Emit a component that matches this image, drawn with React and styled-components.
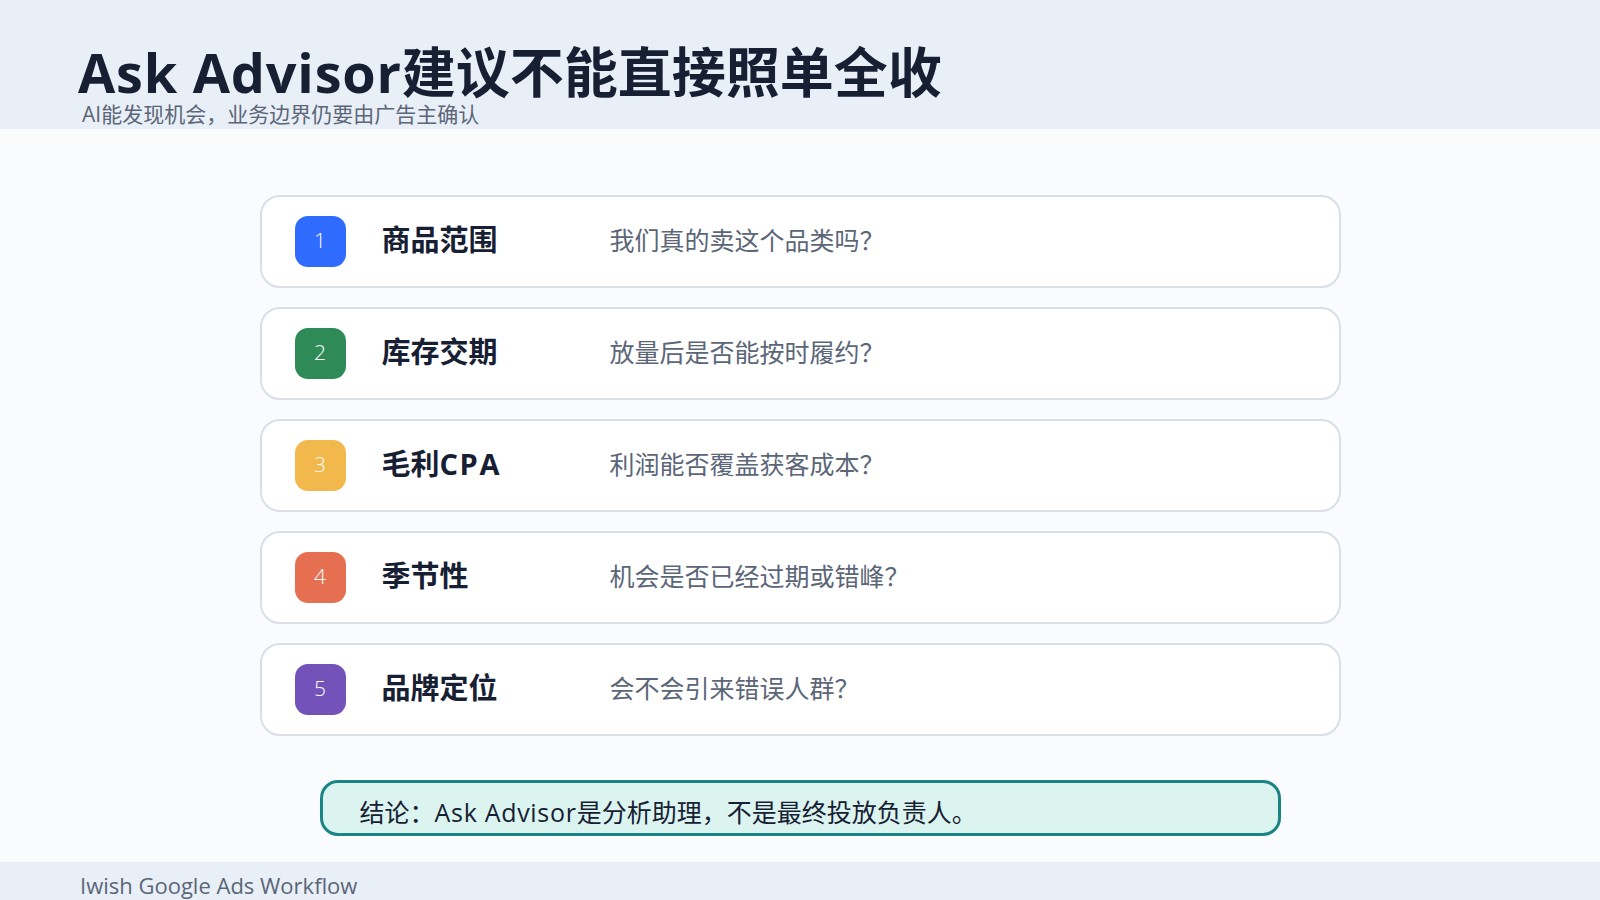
import React from "react";
import styled, { createGlobalStyle } from "styled-components";

const Global = createGlobalStyle`
  html, body { margin: 0; padding: 0; background: #f9fbfd; }
  body { font-family: "Open Sans", "Noto Sans CJK SC", sans-serif; }
`;
const Page = styled.div`
  width: 1600px; height: 900px; overflow: hidden;
  display: flex; flex-direction: column;
  background: #f9fbfd;
`;
const Header = styled.header`
  height: 129px; box-sizing: border-box; background: #e9eff6;
  padding: 37px 0 0 78px; flex: none;
`;
const Title = styled.h1`
  margin: 0; font-size: 54px; line-height: 70px; font-weight: 700; color: #172033;
`;
const Latin = styled.span`
  letter-spacing: ${p => p.$spacing}px;
`;
const Subtitle = styled.p`
  margin: -7px 0 0 4px; font-size: 21px; line-height: 28px; color: #5b6678;
`;
const Main = styled.main`
  flex: 1; display: flex; flex-direction: column; align-items: center;
  padding-top: 66px;
`;
const List = styled.div`
  width: 1081px; display: flex; flex-direction: column; gap: 19px;
`;
const Card = styled.div`
  height: 93px; box-sizing: border-box; background: #fff;
  border: 2px solid #d8dfe8; border-radius: 20px;
  display: flex; align-items: center; padding-left: 33px;
`;
const Badge = styled.div`
  width: 51px; height: 51px; border-radius: 13px; flex: none;
  background: ${p => p.$color}; color: #fff;
  display: flex; align-items: center; justify-content: center;
  font-size: 21px; font-weight: 300; margin-right: 36px; padding-bottom: 4px; box-sizing: border-box;
`;
const Label = styled.div`
  width: 228px; flex: none; font-size: 29px; line-height: 40px; font-weight: 700; color: #172033;
  padding-bottom: 4px;
`;
const Desc = styled.div`
  font-size: 25px; line-height: 34px; color: #5b6678; padding-bottom: 4px;
`;
const Conclusion = styled.div`
  width: 961px; height: 56px; box-sizing: border-box; margin-top: 44px;
  background: #dbf4ef; border: 3px solid #1b8585; border-radius: 18px;
  display: flex; align-items: center; padding: 5px 0 0 37px;
  font-size: 25px; color: #172033;
`;
const Footer = styled.footer`
  height: 38px; flex: none; background: #e9eff6; box-sizing: border-box;
  padding-left: 80px; font-size: 22px; line-height: 46px; color: #5b6678;
  overflow: hidden;
`;

const rows = [
  ["1", "#2f6bff", "商品范围", "我们真的卖这个品类吗？"],
  ["2", "#2e8b57", "库存交期", "放量后是否能按时履约？"],
  ["3", "#f2b84b", <>毛利<Latin $spacing={1.6}>CPA</Latin></>, "利润能否覆盖获客成本？"],
  ["4", "#e76f51", "季节性", "机会是否已经过期或错峰？"],
  ["5", "#7353ba", "品牌定位", "会不会引来错误人群？"],
];

export default function App() {
  return (
    <Page>
      <Global />
      <Header>
        <Title><Latin $spacing={0.8}>Ask Advisor</Latin>建议不能直接照单全收</Title>
        <Subtitle>AI能发现机会，业务边界仍要由广告主确认</Subtitle>
      </Header>
      <Main>
        <List>
          {rows.map(([n, c, l, d]) => (
            <Card key={n}>
              <Badge $color={c}>{n}</Badge>
              <Label>{l}</Label>
              <Desc>{d}</Desc>
            </Card>
          ))}
        </List>
        <Conclusion><span>结论：<Latin $spacing={0.7}>Ask Advisor</Latin>是分析助理，不是最终投放负责人。</span></Conclusion>
      </Main>
      <Footer>Iwish Google Ads Workflow</Footer>
    </Page>
  );
}
